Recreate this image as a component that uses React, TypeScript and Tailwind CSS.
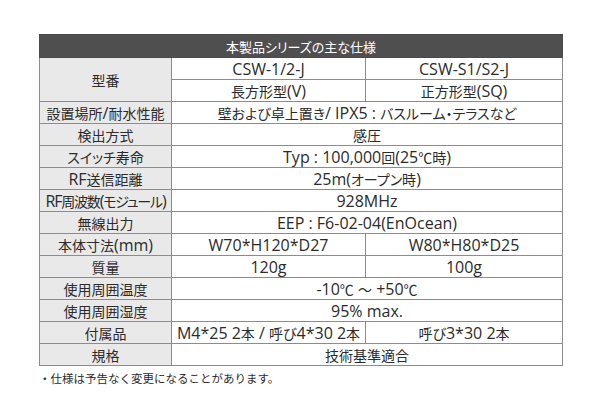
import React from "react";

const cjk = { fontFamily: '"Noto Sans CJK JP", "Noto Sans", sans-serif', fontFeatureSettings: '"palt"' };

function T({ s }: { s: string }) {
  const parts = s.match(/[\x20-\x7e]+|[^\x20-\x7e]+/g) || [];
  return (
    <>
      {parts.map((p, i) =>
        /^[\x20-\x7e]+$/.test(p) ? (
          <span key={i} className="font-['Open_Sans',sans-serif] text-[16px] whitespace-pre">
            {p}
          </span>
        ) : (
          <span key={i}>{p}</span>
        )
      )}
    </>
  );
}

type Row = { label: string; a: string; b?: string; tight?: boolean };

const rows: Row[] = [
  { label: "設置場所/耐水性能", a: "壁および卓上置き/ IPX5 : バスルーム・テラスなど" },
  { label: "検出方式", a: "感圧" },
  { label: "スイッチ寿命", a: "Typ : 100,000回(25℃時)" },
  { label: "RF送信距離", a: "25m(オープン時)" },
  { label: "RF周波数(モジュール)", a: "928MHz", tight: true },
  { label: "無線出力", a: "EEP : F6-02-04(EnOcean)" },
  { label: "本体寸法(mm)", a: "W70*H120*D27", b: "W80*H80*D25" },
  { label: "質量", a: "120g", b: "100g" },
  { label: "使用周囲温度", a: "-10℃ ～ +50℃" },
  { label: "使用周囲湿度", a: "95% max." },
  { label: "付属品", a: "M4*25 2本 / 呼び4*30 2本", b: "呼び3*30 2本" },
  { label: "規格", a: "技術基準適合" },
];

const cell = "border border-[#8c8c8c] h-[22px] p-0 text-center align-middle leading-none whitespace-nowrap";

export default function App() {
  return (
    <div className="w-[600px] h-[418px] bg-white text-[#2b2b2b]" style={cjk}>
      <div className="pt-[34px] pl-[39px]">
        <table className="border-collapse table-fixed w-[523px] text-[14px]">
          <colgroup>
            <col className="w-[132px]" />
            <col className="w-[194px]" />
            <col className="w-[197px]" />
          </colgroup>
          <tbody>
            <tr>
              <td colSpan={3} className="border border-[#4a4a4a] bg-[#4f4f4f] text-white text-[13px] h-[23px] p-0 text-center align-middle leading-none">
                本製品シリーズの主な仕様
              </td>
            </tr>
            <tr>
              <td rowSpan={2} className={`${cell} bg-[#e9e9e9]`}>型番</td>
              <td className={cell}><T s="CSW-1/2-J" /></td>
              <td className={cell}><T s="CSW-S1/S2-J" /></td>
            </tr>
            <tr>
              <td className={cell}><T s="長方形型(V)" /></td>
              <td className={cell}><T s="正方形型(SQ)" /></td>
            </tr>
            {rows.map((r) => (
              <tr key={r.label}>
                <td className={`${cell} bg-[#e9e9e9] ${r.tight ? "tracking-[-1.2px]" : ""}`}><T s={r.label} /></td>
                {r.b ? (
                  <>
                    <td className={cell}><T s={r.a} /></td>
                    <td className={cell}><T s={r.b} /></td>
                  </>
                ) : (
                  <td colSpan={2} className={cell}><T s={r.a} /></td>
                )}
              </tr>
            ))}
          </tbody>
        </table>
        <div className="mt-[7px] text-[11.5px] leading-none [font-feature-settings:normal]">・仕様は予告なく変更になることがあります。</div>
      </div>
    </div>
  );
}
